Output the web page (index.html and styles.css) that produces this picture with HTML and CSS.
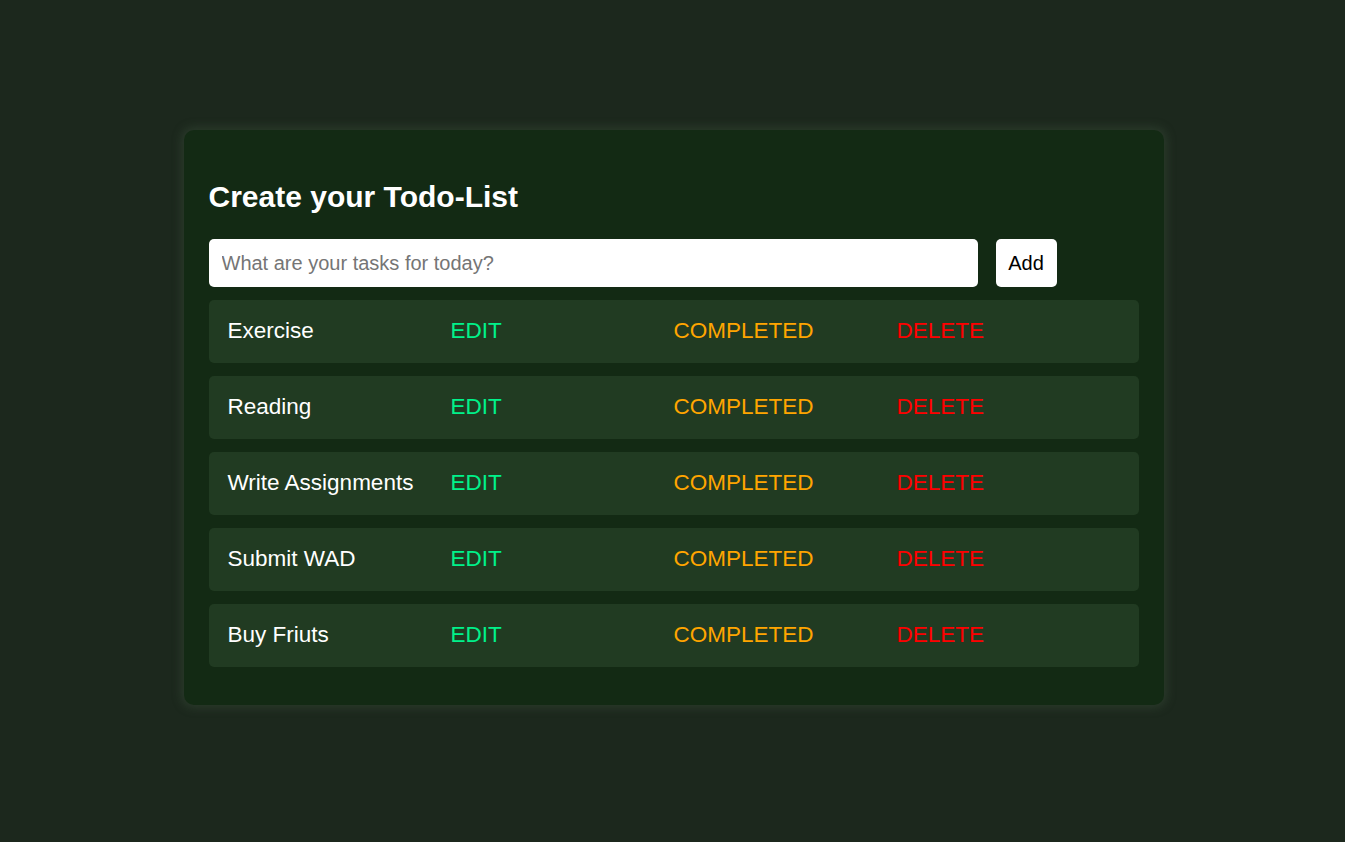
FILE: index.html
```html
<!DOCTYPE html>
<html lang="en">
<head>
<meta charset="utf-8">
<title>Todo List</title>
<link rel="stylesheet" href="styles.css">
</head>
<body>
<main class="card">
  <h2 class="title">Create your Todo-List</h2>
  <form class="add-form">
    <input class="task-input" type="text" placeholder="What are your tasks for today?">
    <button class="add-btn" type="button">Add</button>
  </form>
  <ul class="list">
    <li class="item"><span class="name">Exercise</span><span class="edit">EDIT</span><span class="done">COMPLETED</span><span class="del">DELETE</span></li>
    <li class="item"><span class="name">Reading</span><span class="edit">EDIT</span><span class="done">COMPLETED</span><span class="del">DELETE</span></li>
    <li class="item"><span class="name">Write Assignments</span><span class="edit">EDIT</span><span class="done">COMPLETED</span><span class="del">DELETE</span></li>
    <li class="item"><span class="name">Submit WAD</span><span class="edit">EDIT</span><span class="done">COMPLETED</span><span class="del">DELETE</span></li>
    <li class="item"><span class="name">Buy Friuts</span><span class="edit">EDIT</span><span class="done">COMPLETED</span><span class="del">DELETE</span></li>
  </ul>
</main>
</body>
</html>
```

FILE: styles.css
```css
* { box-sizing: border-box; }
html, body {
  margin: 0;
  padding: 0;
}
body {
  background: #1c281d;
  font-family: "Liberation Sans", Arial, sans-serif;
  padding-top: 130px;
  min-height: 842px;
}
.card {
  width: 980px;
  margin: 0 auto;
  transform: translateX(1px);
  background: #132a14;
  border-radius: 10px;
  box-shadow: 0 0 10px 3px rgba(60, 80, 60, 0.45);
  padding: 49px 25px 38px;
}
.title {
  color: #fff;
  font-size: 30px;
  font-weight: bold;
  margin: 0 0 25px;
  line-height: 35px;
}
.add-form {
  display: flex;
  gap: 18px;
  margin-bottom: 13px;
}
.task-input {
  width: 769px;
  height: 48px;
  border: none;
  border-radius: 5px;
  padding: 0 13px;
  font-family: inherit;
  font-size: 20px;
  color: #000;
  background: #fff;
  outline: none;
}
.task-input::placeholder { color: #757575; }
.add-btn {
  width: 61px;
  height: 48px;
  border: none;
  border-radius: 5px;
  background: #fff;
  color: #000;
  font-family: inherit;
  font-size: 20px;
  padding: 0;
}
.list {
  list-style: none;
  margin: 0;
  padding: 0;
  display: flex;
  flex-direction: column;
  gap: 13px;
}
.item {
  width: 930px;
  display: grid;
  grid-template-columns: repeat(4, 1fr);
  padding: 18px 19px 20px;
  background: #213b22;
  border-radius: 5px;
  font-size: 22.5px;
  line-height: 25px;
}
.name { color: #fff; }
.edit { color: #00f28a; }
.done { color: #ffa500; }
.del { color: #ff0000; }
```
